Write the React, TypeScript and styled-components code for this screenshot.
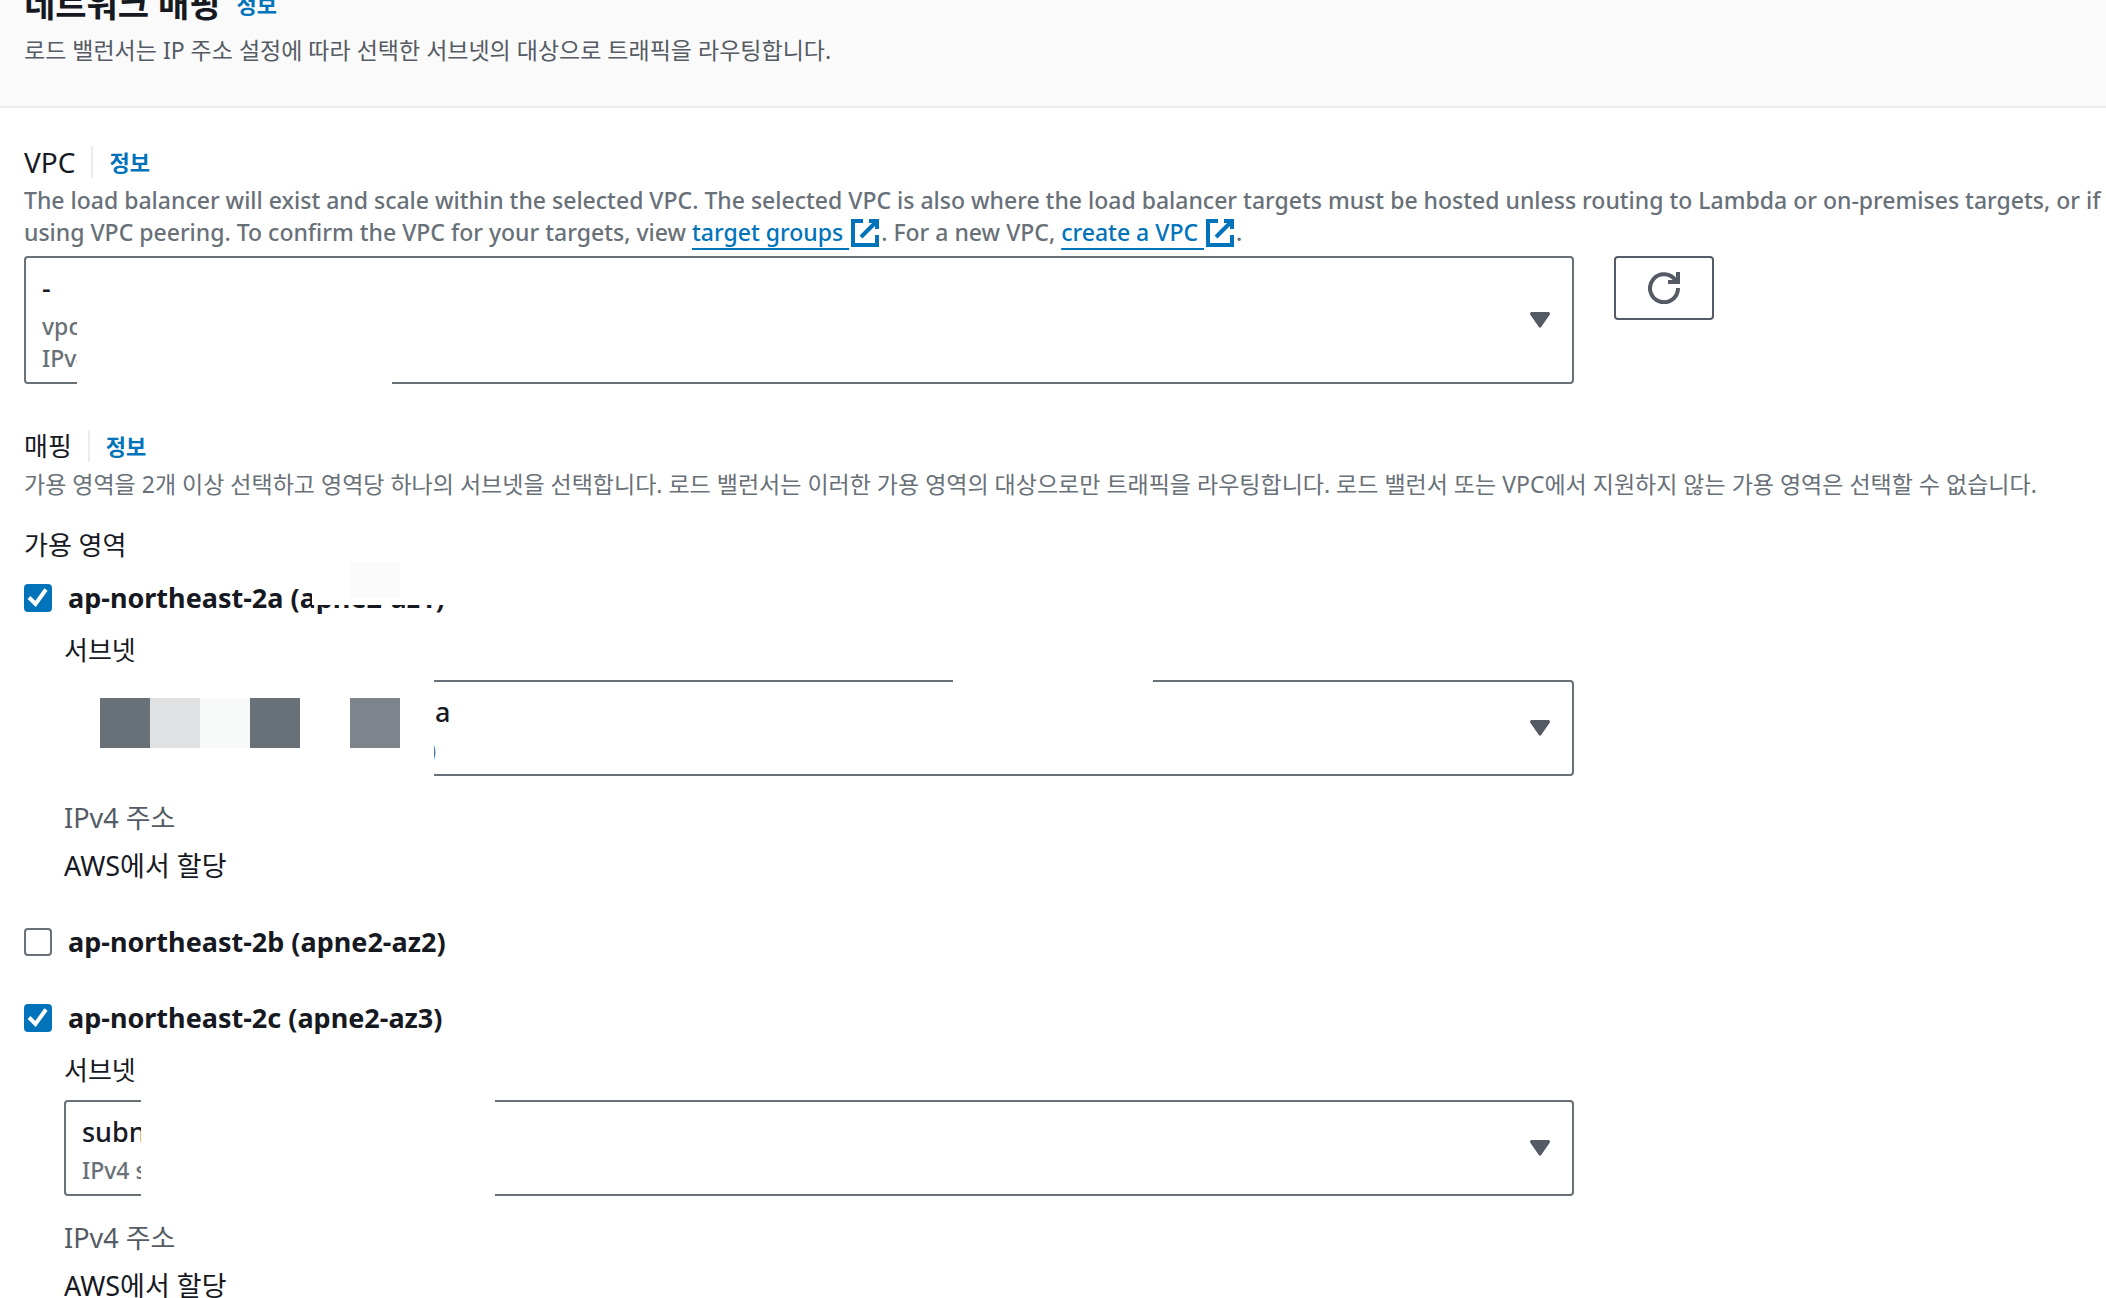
import React, { useState } from "react";
import styled, { createGlobalStyle } from "styled-components";

const color = {
  text: "#16191f",
  secondary: "#545b64",
  muted: "#687078",
  link: "#0073bb",
  divider: "#eaeded",
  surface: "#ffffff",
  header: "#fafafa",
};

const GlobalStyle = createGlobalStyle`
  * { box-sizing: border-box; }
  body { margin: 0; background: ${color.surface}; }
  body, button, select, input {
    font-family: "Noto Sans", "Noto Sans CJK KR", sans-serif;
    color: ${color.text};
  }
`;

const Page = styled.main`
  height: 100vh;
  overflow: hidden;
`;

const Header = styled.header`
  margin-top: -16px;
  padding: 0 24px 40px;
  background: ${color.header};
  border-bottom: 2px solid ${color.divider};
`;

const HeadingRow = styled.div`
  display: flex;
  align-items: center;
  gap: 16px;
  height: 40px;
  margin-bottom: 10px;
`;

const Heading = styled.h2`
  margin: 0;
  font-size: 34px;
  line-height: 40px;
  font-weight: 700;
`;

const Description = styled.p<{ $strong?: boolean; $latin?: boolean }>`
  margin: 0;
  font-size: 23px;
  line-height: 32px;
  font-weight: ${(p) => (p.$latin ? 500 : 400)};
  color: ${(p) => (p.$strong ? color.secondary : color.muted)};
`;

const InfoLink = styled.a`
  font-size: 22px;
  line-height: 32px;
  font-weight: 700;
  color: ${color.link};
  text-decoration: none;
`;

const Body = styled.div`
  padding: 38px 2px 0 24px;
`;

const Field = styled.section`
  margin-bottom: 46px;
`;

const LabelRow = styled.div`
  display: flex;
  align-items: center;
  height: 32px;
  margin-bottom: 6px;
`;

const Label = styled.label<{ $latin?: boolean }>`
  display: block;
  font-size: ${(p) => (p.$latin ? 28 : 26)}px;
  line-height: 32px;
`;

const GroupTitle = styled.h3`
  margin: 0;
  font-size: 26px;
  line-height: 32px;
  font-weight: 400;
`;

const LabelInfo = styled.span`
  display: flex;
  align-items: center;
  height: 32px;
  margin-left: 16px;
  padding-left: 16px;
  border-left: 2px solid ${color.divider};
`;

const ExternalLink = styled.a`
  color: ${color.link};
  text-decoration: underline;
  text-decoration-thickness: 2px;
  text-underline-offset: 7px;
  text-decoration-skip-ink: none;
  white-space: pre;
`;

const ExternalSvg = styled.svg`
  display: inline-block;
  width: 32px;
  height: 32px;
  margin-top: -4px;
  vertical-align: middle;
  fill: none;
  stroke: ${color.link};
  stroke-width: 2;
`;

const Columns = styled.div<{ $top: number }>`
  display: grid;
  grid-template-columns: repeat(12, 1fr);
  gap: 40px;
  align-items: start;
  margin-top: ${(p) => p.$top}px;
`;

const MainColumn = styled.div<{ $indent?: boolean }>`
  grid-column: span 9;
  padding-left: ${(p) => (p.$indent ? 40 : 0)}px;
`;

const SelectFrame = styled.div`
  position: relative;
  display: grid;
`;

const Select = styled.select<{ $lines: number; $indent: number }>`
  grid-area: 1 / 1;
  appearance: none;
  width: 100%;
  margin: 0;
  padding: 14px 60px ${(p) => 14 + p.$lines * 32}px ${(p) => 16 + p.$indent}px;
  border: 2px solid ${color.muted};
  border-radius: 4px;
  background: ${color.surface};
  font-size: 27px;
  line-height: 32px;
  font-weight: 500;
`;

const Details = styled.div<{ $indent: number }>`
  grid-area: 1 / 1;
  z-index: 1;
  padding: 54px 18px 10px ${(p) => 18 + p.$indent}px;
  font-size: 23px;
  line-height: 32px;
  font-weight: 500;
  color: ${color.muted};
  pointer-events: none;
`;

const DetailLine = styled.div`
  height: 32px;
`;

const Caret = styled.svg`
  grid-area: 1 / 1;
  z-index: 1;
  place-self: center end;
  width: 20px;
  height: 16px;
  margin-right: 24px;
  fill: ${color.secondary};
  pointer-events: none;
`;

const Cover = styled.div<{ $x: number; $y: number; $w: number; $h: number; $fill?: string }>`
  position: absolute;
  z-index: 2;
  left: ${(p) => p.$x}px;
  top: ${(p) => p.$y}px;
  width: ${(p) => p.$w}px;
  height: ${(p) => p.$h}px;
  background: ${(p) => p.$fill ?? color.surface};
  pointer-events: none;
`;

const RefreshButton = styled.button`
  justify-self: start;
  display: flex;
  align-items: center;
  justify-content: center;
  height: 64px;
  padding: 0 32px;
  border: 2px solid ${color.secondary};
  border-radius: 4px;
  background: ${color.surface};
`;

const RefreshSvg = styled.svg`
  width: 32px;
  height: 32px;
  fill: none;
  stroke: ${color.secondary};
  stroke-width: 4;
`;

const ZoneGroup = styled.div`
  display: flex;
  flex-direction: column;
  gap: 44px;
  margin-top: 21px;
`;

const ZoneLabel = styled.label`
  position: relative;
  display: flex;
  align-items: center;
  gap: 16px;
  height: 32px;
  font-size: 27px;
  line-height: 32px;
  font-weight: 700;
`;

const CheckFrame = styled.span`
  display: grid;
  width: 28px;
  height: 28px;
`;

const Checkbox = styled.input`
  grid-area: 1 / 1;
  appearance: none;
  width: 28px;
  height: 28px;
  margin: 0;
  border: 2px solid ${color.muted};
  border-radius: 4px;
  background: ${color.surface};

  &:checked {
    border-color: ${color.link};
    background: ${color.link};
  }
`;

const CheckSvg = styled.svg`
  grid-area: 1 / 1;
  z-index: 1;
  width: 28px;
  height: 28px;
  fill: none;
  stroke: ${color.surface};
  stroke-width: 4;
  pointer-events: none;
`;

const SubnetLabel = styled(Label)`
  margin: 20px 0 14px;
`;

const Pair = styled.dl`
  display: flex;
  flex-direction: column;
  gap: 16px;
  margin: 26px 0 0;
  font-size: 27px;
  line-height: 32px;
`;

const PairName = styled.dt`
  color: ${color.secondary};
`;

const PairValue = styled.dd`
  margin: 0;
`;

const ZonesTitle = styled(GroupTitle)`
  margin-top: 29px;
`;

type Box = { x: number; y: number; w: number; h: number; fill?: string };

const Covers = ({ boxes }: { boxes: Box[] }) => (
  <>
    {boxes.map((b, i) => (
      <Cover key={i} $x={b.x} $y={b.y} $w={b.w} $h={b.h} $fill={b.fill} />
    ))}
  </>
);

const ExternalIcon = () => (
  <ExternalSvg viewBox="0 0 16 16" aria-hidden="true">
    <path d="M10 2h4v4M6 10l8-8M14 9v5H2V2h5" />
  </ExternalSvg>
);

type SelectBoxProps = {
  id: string;
  value: string;
  details: string[];
  valueIndent?: number;
  detailIndent?: number;
  covers: Box[];
};

const SelectBox = ({ id, value, details, valueIndent = 0, detailIndent = 0, covers }: SelectBoxProps) => (
  <SelectFrame>
    <Select id={id} $lines={details.length} $indent={valueIndent} defaultValue={value}>
      <option value={value}>{value}</option>
    </Select>
    <Details $indent={detailIndent}>
      {details.map((d) => (
        <DetailLine key={d}>{d}</DetailLine>
      ))}
    </Details>
    <Caret viewBox="0 0 20 16" aria-hidden="true">
      <path d="M1.5 0h17q1.5 0 1.5 1.5 0 .8-.5 1.5l-8.300 12q-1.200 1.600-2.400 0L.5 3Q0 2.300 0 1.500 0 0 1.500 0z" />
    </Caret>
    <Covers boxes={covers} />
  </SelectFrame>
);

type Zone = {
  id: string;
  name: string;
  checked: boolean;
  covers: Box[];
  subnet?: Omit<SelectBoxProps, "id">;
};

const zones: Zone[] = [
  {
    id: "2a",
    name: "ap-northeast-2a (apne2-az1)",
    checked: true,
    covers: [
      { x: 288, y: -10, w: 140, h: 33 },
      { x: 326, y: -20, w: 50, h: 36, fill: "#fafafa" },
    ],
    subnet: {
      value: "a",
      details: [")"],
      valueIndent: 353,
      detailIndent: 347,
      covers: [
        { x: -2, y: -8, w: 372, h: 112 },
        { x: 889, y: -4, w: 200, h: 8 },
        { x: 36, y: 18, w: 50, h: 50, fill: "#687078" },
        { x: 86, y: 18, w: 50, h: 50, fill: "#e0e1e3" },
        { x: 136, y: 18, w: 50, h: 50, fill: "#f7f9f9" },
        { x: 186, y: 18, w: 50, h: 50, fill: "#687078" },
        { x: 286, y: 18, w: 50, h: 50, fill: "#7d848b" },
      ],
    },
  },
  { id: "2b", name: "ap-northeast-2b (apne2-az2)", checked: false, covers: [] },
  {
    id: "2c",
    name: "ap-northeast-2c (apne2-az3)",
    checked: true,
    covers: [],
    subnet: {
      value: "subn",
      details: ["IPv4 s"],
      covers: [{ x: 77, y: -4, w: 354, h: 104 }],
    },
  },
];

const ZoneItem = ({ zone }: { zone: Zone }) => {
  const [checked, setChecked] = useState(zone.checked);
  return (
    <div>
      <ZoneLabel>
        <CheckFrame>
          <Checkbox type="checkbox" checked={checked} onChange={() => setChecked(!checked)} />
          {checked && (
            <CheckSvg viewBox="0 0 28 28" aria-hidden="true">
              <path d="M5 13.500l6.500 6.500L22 5.500" />
            </CheckSvg>
          )}
        </CheckFrame>
        {zone.name}
        <Covers boxes={zone.covers} />
      </ZoneLabel>
      {zone.subnet && (
        <Columns $top={0}>
          <MainColumn $indent>
            <SubnetLabel htmlFor={`subnet-${zone.id}`}>서브넷</SubnetLabel>
            <SelectBox id={`subnet-${zone.id}`} {...zone.subnet} />
            <Pair>
              <PairName>IPv4 주소</PairName>
              <PairValue>AWS에서 할당</PairValue>
            </Pair>
          </MainColumn>
        </Columns>
      )}
    </div>
  );
};

export default function App() {
  return (
    <Page>
      <GlobalStyle />
      <Header>
        <HeadingRow>
          <Heading>네트워크 매핑</Heading>
          <InfoLink href="#network-mapping">정보</InfoLink>
        </HeadingRow>
        <Description $strong>
          로드 밸런서는 IP 주소 설정에 따라 선택한 서브넷의 대상으로 트래픽을 라우팅합니다.
        </Description>
      </Header>
      <Body>
        <Field>
          <LabelRow>
            <Label $latin htmlFor="vpc">VPC</Label>
            <LabelInfo>
              <InfoLink href="#vpc-info">정보</InfoLink>
            </LabelInfo>
          </LabelRow>
          <Description $latin>
            The load balancer will exist and scale within the selected VPC. The selected VPC is also where the load
            balancer targets must be hosted unless routing to Lambda or on-premises targets, or if using VPC peering. To
            confirm the VPC for your targets, view <ExternalLink href="#target-groups">{"target groups "}<ExternalIcon /></ExternalLink>. For
            a new VPC, <ExternalLink href="#create-vpc">{"create a VPC "}<ExternalIcon /></ExternalLink>.
          </Description>
          <Columns $top={7}>
            <MainColumn>
              <SelectBox
                id="vpc"
                value="-"
                details={["vpc", "IPv4"]}
                covers={[{ x: 53, y: 46, w: 315, h: 86 }]}
              />
            </MainColumn>
            <RefreshButton type="button" aria-label="새로 고침">
              <RefreshSvg viewBox="0 0 32 32" aria-hidden="true">
                <path d="M30 16A14 14 0 1 1 28 9M30 0v10H20" />
              </RefreshSvg>
            </RefreshButton>
          </Columns>
        </Field>
        <section>
          <LabelRow>
            <GroupTitle>매핑</GroupTitle>
            <LabelInfo>
              <InfoLink href="#mapping-info">정보</InfoLink>
            </LabelInfo>
          </LabelRow>
          <Description>
            가용 영역을 2개 이상 선택하고 영역당 하나의 서브넷을 선택합니다. 로드 밸런서는 이러한 가용 영역의 대상으로만 트래픽을
            라우팅합니다. 로드 밸런서 또는 VPC에서 지원하지 않는 가용 영역은 선택할 수 없습니다.
          </Description>
          <ZonesTitle>가용 영역</ZonesTitle>
          <ZoneGroup>
            {zones.map((z) => (
              <ZoneItem key={z.id} zone={z} />
            ))}
          </ZoneGroup>
        </section>
      </Body>
    </Page>
  );
}
